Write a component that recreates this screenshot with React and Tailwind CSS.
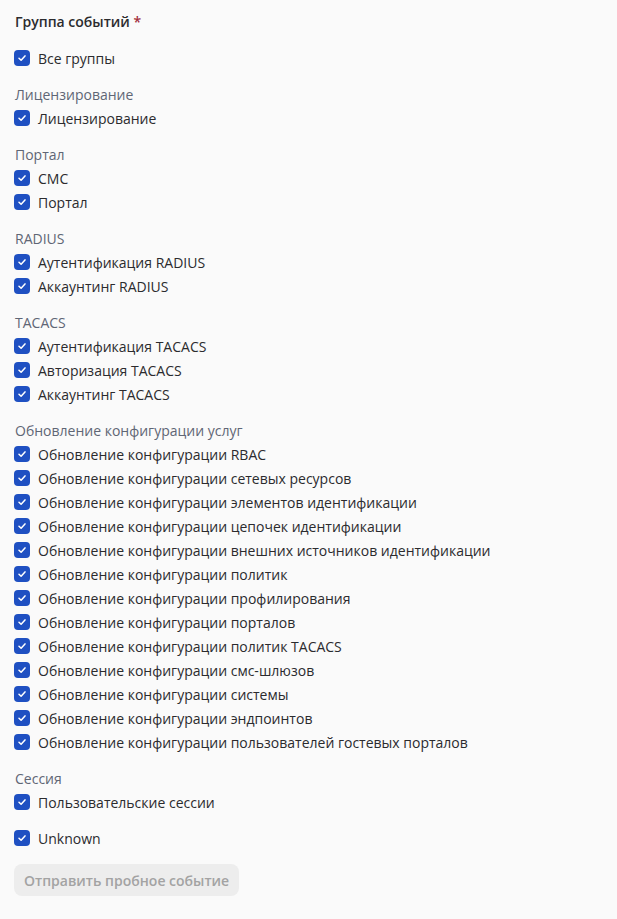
import React from "react";

const groups = [
  { label: "Лицензирование", items: ["Лицензирование"] },
  { label: "Портал", items: ["СМС", "Портал"] },
  { label: "RADIUS", items: ["Аутентификация RADIUS", "Аккаунтинг RADIUS"] },
  { label: "TACACS", items: ["Аутентификация TACACS", "Авторизация TACACS", "Аккаунтинг TACACS"] },
  {
    label: "Обновление конфигурации услуг",
    items: [
      "Обновление конфигурации RBAC",
      "Обновление конфигурации сетевых ресурсов",
      "Обновление конфигурации элементов идентификации",
      "Обновление конфигурации цепочек идентификации",
      "Обновление конфигурации внешних источников идентификации",
      "Обновление конфигурации политик",
      "Обновление конфигурации профилирования",
      "Обновление конфигурации порталов",
      "Обновление конфигурации политик TACACS",
      "Обновление конфигурации смс-шлюзов",
      "Обновление конфигурации системы",
      "Обновление конфигурации эндпоинтов",
      "Обновление конфигурации пользователей гостевых порталов",
    ],
  },
  { label: "Сессия", items: ["Пользовательские сессии"] },
];

function Check({ label }) {
  return (
    <label className="flex items-center h-6 gap-2">
      <span className="w-4 h-4 rounded-[4px] bg-[#1f50c2] flex items-center justify-center shrink-0">
        <svg width="10" height="10" viewBox="0 0 10 10" fill="none">
          <path d="M2 5.2 L4.1 7.2 L8 2.9" stroke="white" strokeWidth="1.5" strokeLinecap="round" strokeLinejoin="round" />
        </svg>
      </span>
      <span className="text-[14px] text-[#2b2b2e]">{label}</span>
    </label>
  );
}

export default function App() {
  return (
    <div className="min-h-[919px] bg-[#fafafa] px-[14px] pt-[12px] font-['Open_Sans',sans-serif]">
      <div className="text-[14px] font-semibold text-[#2b2b2e] leading-5 ml-[1px]">
        Группа событий <span className="text-[#a3303d]">*</span>
      </div>
      <div className="mt-[14px] flex flex-col gap-3">
        <Check label="Все группы" />
        {groups.map((g) => (
          <div key={g.label} className="flex flex-col">
            <div className="h-6 flex items-center text-[14px] text-[#5f6675] ml-[1px]">{g.label}</div>
            {g.items.map((it) => (
              <Check key={it} label={it} />
            ))}
          </div>
        ))}
        <Check label="Unknown" />
      </div>
      <button
        type="button"
        className="mt-[14px] h-8 px-[10px] rounded-lg bg-[#ededed] text-[14px] font-semibold text-[#a3a3a3]"
      >
        Отправить пробное событие
      </button>
    </div>
  );
}
